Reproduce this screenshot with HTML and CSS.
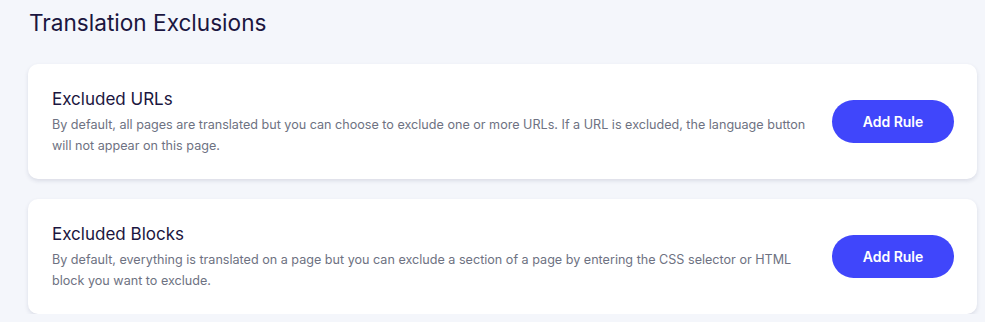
FILE: index.html
```html
<!DOCTYPE html>
<html>
<head>
  <meta charset="UTF-8">
  <title>Translation Exclusions</title>
  <link rel="stylesheet" href="styles.css">
</head>
<body>

  <h1 class="page-title">Translation Exclusions</h1>

  <div class="rule-card">
    <div class="rule-card__text">
      <h3 class="rule-card__title">Excluded URLs</h3>
      <p class="rule-card__desc">By default, all pages are translated but you can choose to exclude one or more URLs. If a URL is excluded, the language button will not appear on this page.</p>
    </div>
    <button class="add-rule">Add Rule</button>
  </div>

  <div class="rule-card">
    <div class="rule-card__text">
      <h3 class="rule-card__title">Excluded Blocks</h3>
      <p class="rule-card__desc">By default, everything is translated on a page but you can exclude a section of a page by entering the CSS selector or HTML block you want to exclude.</p>
    </div>
    <button class="add-rule">Add Rule</button>
  </div>

</body>
</html>
```

FILE: styles.css
```css
body {
  margin: 0;
  padding: 0 8px 0 28px;
  background: #f4f6fb;
  font-family: Inter, sans-serif;
  color: #1b1640;
}

.page-title {
  margin: 0;
  padding: 8px 0 0 1px;
  font-size: 22.6px;
  font-weight: 400;
  line-height: 29px;
  color: #1b1640;
}

.rule-card {
  display: flex;
  align-items: center;
  justify-content: space-between;
  margin-top: 27px;
  padding: 22px 23px 22px 24px;
  min-height: 71px;
  background: #fff;
  border-radius: 10px;
  box-shadow: 0 2px 4px rgba(30, 40, 80, .12);
}

.rule-card + .rule-card {
  margin-top: 20px;
}

.rule-card__text {
  max-width: 770px;
}

.rule-card__title {
  margin: 0 0 3px;
  font-size: 17px;
  font-weight: 400;
  line-height: 23px;
  color: #1b1640;
}

.rule-card__desc {
  margin: 0;
  font-size: 12.6px;
  line-height: 21px;
  color: #6e7282;
}

.add-rule {
  width: 122px;
  height: 43px;
  border: 0;
  border-radius: 22px;
  background: #4046fb;
  color: #fff;
  font-family: Inter, sans-serif;
  font-size: 14px;
  font-weight: 600;
  cursor: pointer;
}
```
